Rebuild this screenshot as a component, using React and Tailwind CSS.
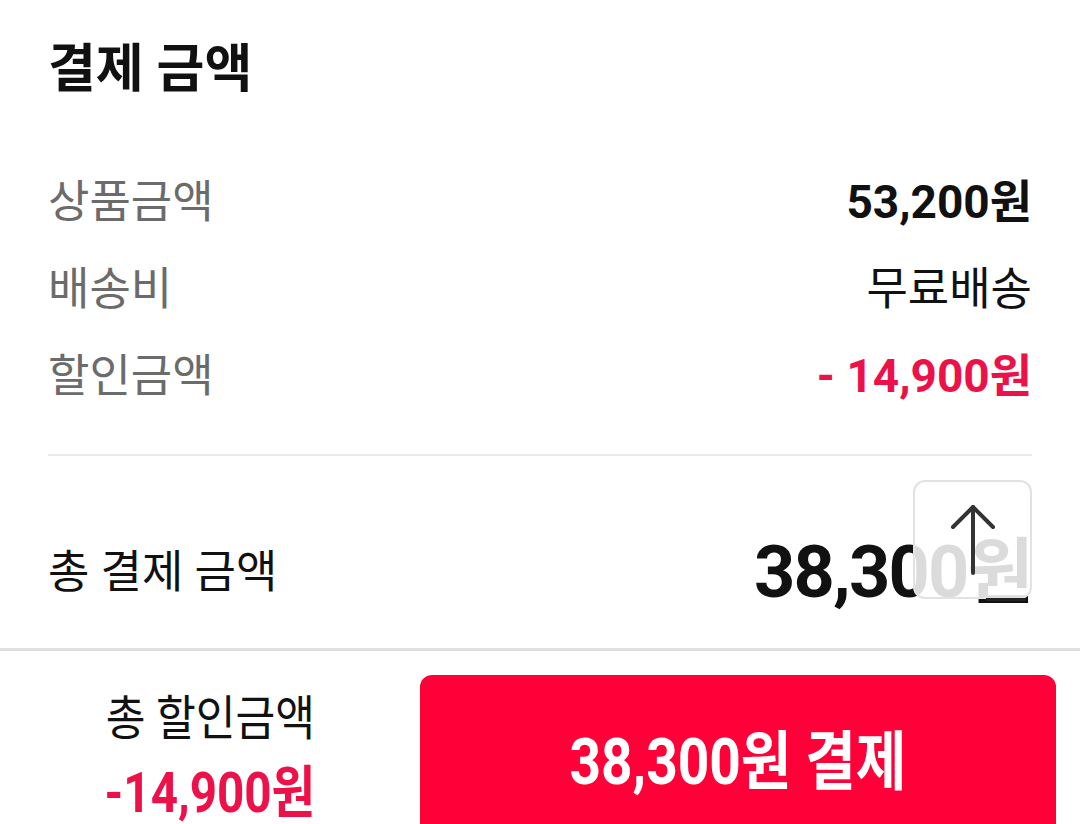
import React from "react";

const FONT = "font-['Roboto','Noto_Sans_CJK_KR',sans-serif]";

function Row({ label, value, valueClass }) {
  return (
    <div className="flex items-center justify-between h-[87px]">
      <span className="text-[45px] text-[#6b6b6b]">{label}</span>
      <span className={valueClass}>{value}</span>
    </div>
  );
}

export default function App() {
  return (
    <div className={`${FONT} w-[1080px] h-[824px] bg-white overflow-hidden relative`}>
      <div className="px-12 pt-[38px]">
        <h1 className="text-[52px] font-bold text-[#111] leading-[64px]">결제 금액</h1>

        <div className="mt-[57px]">
          <Row label="상품금액" value="53,200원" valueClass="text-[46px] font-bold text-[#111]" />
          <Row label="배송비" value="무료배송" valueClass="text-[45px] text-[#111]" />
          <Row label="할인금액" value="- 14,900원" valueClass="text-[46px] font-bold text-[#ec1249]" />
        </div>

        <div className="mt-[34px] border-t-2 border-[#eaeaea]" />

        <div className="flex items-center justify-between h-[192px] pt-[42px] relative">
          <span className="text-[45px] text-[#111]">총 결제 금액</span>
          <span className="text-[72px] font-bold text-[#111] tracking-tight leading-none">38,300원</span>

          {/* scroll to top */}
          <div className="absolute right-0 top-[24px] w-[119px] h-[119px] rounded-[12px] border-2 border-[#e2e2e2] bg-white/85 flex items-center justify-center">
            <svg width="48" height="74" viewBox="0 0 48 74" fill="none" stroke="#333" strokeWidth="4" strokeLinecap="round" strokeLinejoin="round">
              <path d="M24 4 V70" />
              <path d="M4 24 L24 4 L44 24" />
            </svg>
          </div>
          <div className="absolute right-[6px] top-[142px] w-[40px] h-[3px] bg-[#222]" />
        </div>
      </div>

      <div className="border-t-[3px] border-[#e0e0e0]" />

      <div className="flex pt-[24px] pr-6">
        <div className="w-[420px] flex flex-col items-center pt-[14px]">
          <span className="text-[48px] text-[#111] leading-[60px] inline-block scale-x-[0.9]">총 할인금액</span>
          <span className="mt-[16px] text-[56px] font-bold text-[#ec1249] leading-[56px] inline-block scale-x-[0.85]">-14,900원</span>
        </div>
        <div className="flex-1 h-[180px] bg-[#ff0038] rounded-[12px] flex justify-center pt-[50px]">
          <span className="text-[64px] font-bold text-white leading-[76px] inline-block scale-x-[0.86] h-[76px]">38,300원 결제</span>
        </div>
      </div>
    </div>
  );
}
